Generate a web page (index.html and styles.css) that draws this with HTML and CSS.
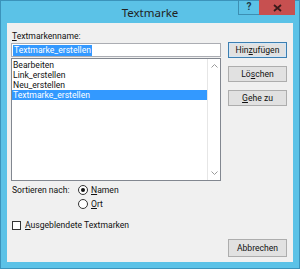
FILE: index.html
```html
<!DOCTYPE html>
<html lang="de">
<head>
<meta charset="utf-8">
<title>Textmarke</title>
<link rel="stylesheet" href="styles.css">
</head>
<body>
<div class="window">
  <div class="titlebar">
    <div></div>
    <div class="title">Textmarke</div>
    <div class="controls">
      <div class="btn-help">?</div>
      <div class="btn-close">
        <svg width="9" height="8" viewBox="0 0 9 8"><path d="M1 1 L8 7 M8 1 L1 7" stroke="#3a1a1a" stroke-width="1.8" fill="none"/></svg>
      </div>
    </div>
  </div>
  <div class="client">
    <div class="top">
      <div class="leftcol">
        <div class="label"><u>T</u>extmarkenname:</div>
        <div class="input"><span class="sel">Textmarke_erstellen</span></div>
        <div class="listbox">
          <div class="items">
            <div class="item">Bearbeiten</div>
            <div class="item">Link_erstellen</div>
            <div class="item">Neu_erstellen</div>
            <div class="item selected">Textmarke_erstellen</div>
          </div>
          <div class="scrollbar">
            <svg width="7" height="4" viewBox="0 0 7 4"><path d="M0.5 3.5 L3.5 0.5 L6.5 3.5" stroke="#9a9a9a" fill="none"/></svg>
            <svg width="7" height="4" viewBox="0 0 7 4"><path d="M0.5 0.5 L3.5 3.5 L6.5 0.5" stroke="#9a9a9a" fill="none"/></svg>
          </div>
        </div>
      </div>
      <div class="rightcol">
        <div class="button default">Hin<u>z</u>ufügen</div>
        <div class="button">Lö<u>s</u>chen</div>
        <div class="button"><u>G</u>ehe zu</div>
      </div>
    </div>
    <div class="sort">
      <div class="sort-label">Sortieren nach:</div>
      <div class="radios">
        <div class="radio-row"><span class="radio checked"></span><span><u>N</u>amen</span></div>
        <div class="radio-row"><span class="radio"></span><span><u>O</u>rt</span></div>
      </div>
    </div>
    <div class="check-row"><span class="checkbox"></span><span><u>A</u>usgeblendete Textmarken</span></div>
    <div class="footer">
      <div class="button">Abbrechen</div>
    </div>
  </div>
</div>
</body>
</html>
```

FILE: styles.css
```css
* { box-sizing: border-box; }
html, body { margin: 0; padding: 0; }
body {
  width: 300px;
  height: 269px;
  overflow: hidden;
  font-family: Roboto, "Noto Sans", sans-serif;
  font-size: 8.6px;
  color: #111;
}
u { text-decoration: underline; text-underline-offset: 1px; }

.window {
  width: 300px;
  height: 269px;
  background: #5bc2e7;
  box-shadow: inset 0 0 0 1px #3b93bb;
  display: flex;
  flex-direction: column;
}

.titlebar {
  height: 23px;
  display: grid;
  grid-template-columns: 1fr auto 1fr;
  align-items: start;
}
.title {
  font-family: "Noto Sans", sans-serif;
  font-size: 11.5px;
  line-height: 23px;
  color: #222;
  padding-top: 1px;
}
.controls {
  justify-self: end;
  display: flex;
  margin-right: 5px;
}
.btn-help {
  width: 21px;
  height: 15px;
  border: 1px solid #3c8fb3;
  border-top: none;
  border-right: none;
  font-weight: bold;
  font-size: 10px;
  line-height: 14px;
  text-align: center;
  color: #1d3a48;
}
.btn-close {
  width: 36px;
  height: 15px;
  background: #c75050;
  display: flex;
  align-items: center;
  justify-content: center;
}

.client {
  flex: 1;
  margin: 0 7px 7px 7px;
  background: #f0f0f0;
  display: flex;
  flex-direction: column;
  padding: 7px 6px 5px 4px;
}

.top { display: flex; gap: 7px; }
.leftcol { width: 210px; display: flex; flex-direction: column; }
.label {
  height: 12px;
  line-height: 12px;
  padding-left: 1px;
}
.input {
  margin-top: 1px;
  height: 14px;
  background: #fff;
  border: 1px solid #abadb3;
  padding: 0 0 0 1px;
  line-height: 12px;
}
.sel {
  background: #3399ff;
  color: #fff;
  padding: 0 1px;
  display: inline-block;
  height: 11px;
  line-height: 11px;
  margin-top: 1px;
}
.listbox {
  margin-top: 1px;
  height: 123px;
  background: #fff;
  border: 1px solid #828790;
  display: flex;
}
.items { flex: 1; padding-top: 1px; }
.item {
  height: 10px;
  line-height: 10px;
  padding-left: 1px;
}
.item.selected { background: #3399ff; color: #fff; }
.scrollbar {
  width: 13px;
  border-left: 1px solid #e6e6e6;
  display: flex;
  flex-direction: column;
  justify-content: space-between;
  align-items: center;
  padding: 5px 0 5px;
}

.rightcol {
  width: 59px;
  display: flex;
  flex-direction: column;
  gap: 8px;
  padding-top: 12px;
}
.button {
  height: 16px;
  width: 59px;
  background: #e1e1e1;
  border: 1px solid #adadad;
  text-align: center;
  line-height: 14px;
}
.button.default { border-color: #3c7fb1; box-shadow: inset 0 0 0 1px #d5e6f5; }

.sort {
  margin-top: 2px;
  display: flex;
  padding-left: 1px;
}
.sort-label { width: 66px; line-height: 14px; }
.radios { display: flex; flex-direction: column; }
.radio-row {
  height: 14px;
  display: flex;
  align-items: center;
  gap: 3px;
}
.radio {
  width: 10px;
  height: 10px;
  border: 1px solid #333;
  border-radius: 50%;
  background: #fff;
  display: flex;
  align-items: center;
  justify-content: center;
}
.radio.checked::after {
  content: "";
  width: 4px;
  height: 4px;
  border-radius: 50%;
  background: #111;
}

.check-row {
  margin-top: 7px;
  height: 14px;
  display: flex;
  align-items: center;
  gap: 4px;
  padding-left: 1px;
}
.checkbox {
  width: 9px;
  height: 9px;
  border: 1px solid #333;
  background: #fff;
}

.footer {
  margin-top: auto;
  display: flex;
  justify-content: flex-end;
}
.footer .button { height: 18px; line-height: 16px; }
```
